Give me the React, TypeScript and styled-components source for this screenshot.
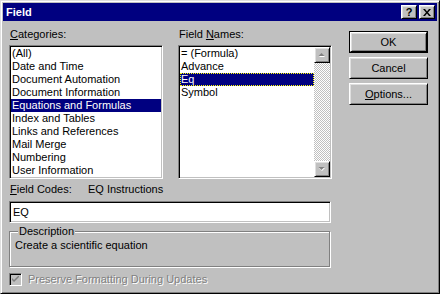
import React from 'react'
import styled, { createGlobalStyle, css } from 'styled-components'

const GlobalStyle = createGlobalStyle`
  html, body {
    margin: 0;
    padding: 0;
    background: #c0c0c0;
  }
  body {
    font-family: "Liberation Sans", Arial, sans-serif;
    font-size: 11px;
    color: #000;
  }
`

const sunken = css`
  border: 1px solid;
  border-color: #808080 #fff #fff #808080;
  box-shadow: inset 1px 1px 0 #000, inset -1px -1px 0 #c0c0c0;
`

const raised = css`
  border: 1px solid;
  border-color: #fff #000 #000 #fff;
  box-shadow: inset 1px 1px 0 #dfdfdf, inset -1px -1px 0 #808080;
`

const Window = styled.div`
  width: 440px;
  height: 294px;
  box-sizing: border-box;
  background: #c0c0c0;
  border: 1px solid;
  border-color: #dfdfdf #000 #000 #dfdfdf;
  box-shadow: inset 1px 1px 0 #fff, inset -1px -1px 0 #808080;
  padding: 2px;
  display: flex;
  flex-direction: column;
`

const TitleBar = styled.div`
  height: 18px;
  background: #000080;
  display: flex;
  align-items: center;
  justify-content: space-between;
  padding: 0 2px 0 3px;
`

const Title = styled.span`
  color: #fff;
  font-weight: bold;
  font-size: 11px;
`

const TitleButtons = styled.div`
  display: flex;
  gap: 2px;
`

const TitleButton = styled.div`
  ${raised};
  box-sizing: border-box;
  width: 16px;
  height: 14px;
  background: #c0c0c0;
  display: flex;
  align-items: center;
  justify-content: center;
  font-weight: bold;
  font-size: 11px;
  line-height: 12px;
`

const Body = styled.div`
  display: flex;
  padding: 7px 0 0 6px;
`

const LeftCol = styled.div`
  width: 323px;
  display: flex;
  flex-direction: column;
`

const ListsRow = styled.div`
  display: flex;
  gap: 15px;
`

const ListGroup = styled.div`
  width: 154px;
  display: flex;
  flex-direction: column;
`

const Label = styled.div`
  line-height: 13px;
  height: 13px;
  padding-left: 1px;
  margin-bottom: 4px;
  white-space: nowrap;
`

const ListBox = styled.div`
  ${sunken};
  box-sizing: border-box;
  height: 134px;
  background: #fff;
  padding: 1px;
  display: flex;
`

const Items = styled.div`
  flex: 1;
  display: flex;
  flex-direction: column;
`

const Item = styled.div<{ $selected?: boolean; $focused?: boolean }>`
  height: 13px;
  line-height: 13px;
  padding-left: 1px;
  white-space: nowrap;
  ${p =>
    p.$selected &&
    css`
      background: #000080;
      color: #fff;
    `}
  ${p =>
    p.$focused &&
    css`
      outline: 1px dotted #ffff00;
      outline-offset: -1px;
    `}
`

const ScrollBar = styled.div`
  width: 16px;
  display: flex;
  flex-direction: column;
`

const ScrollTrack = styled.div`
  flex: 1;
  background-color: #fff;
  background-image: repeating-conic-gradient(#c0c0c0 0 25%, #fff 0 50%);
  background-size: 2px 2px;
`

const ScrollButton = styled.div`
  ${raised};
  box-sizing: border-box;
  height: 16px;
  background: #c0c0c0;
  display: flex;
  align-items: center;
  justify-content: center;
`

const FieldCodesRow = styled.div`
  display: flex;
  line-height: 13px;
  margin-top: 4px;
  padding-left: 1px;
`

const CodesLabel = styled.span`
  width: 78px;
`

const TextBox = styled.div`
  ${sunken};
  box-sizing: border-box;
  width: 322px;
  height: 22px;
  margin-top: 5px;
  background: #fff;
  padding: 3px 3px;
  line-height: 14px;
`

const GroupBox = styled.fieldset`
  box-sizing: border-box;
  width: 321px;
  height: 42px;
  margin: 2px 0 0;
  padding: 1px 5px 0;
  border: 1px solid #808080;
  box-shadow: inset 1px 1px 0 #fff, 1px 1px 0 #fff;
  line-height: 13px;
`

const Legend = styled.legend`
  padding: 0 1px;
  margin-left: 3px;
  line-height: 13px;
  background: #c0c0c0;
`

const CheckRow = styled.div`
  display: flex;
  align-items: center;
  gap: 6px;
  margin-top: 6px;
  line-height: 13px;
`

const CheckBox = styled.div`
  ${sunken};
  box-sizing: border-box;
  width: 13px;
  height: 13px;
  background: #c0c0c0;
  display: flex;
  align-items: center;
  justify-content: center;
`

const DisabledText = styled.span`
  color: #808080;
  text-shadow: 1px 1px 0 #fff;
`

const ButtonCol = styled.div`
  margin-left: 17px;
  padding-top: 3px;
  display: flex;
  flex-direction: column;
  gap: 4px;
`

const Button = styled.div<{ $default?: boolean }>`
  box-sizing: border-box;
  width: 79px;
  height: 22px;
  background: #c0c0c0;
  display: flex;
  align-items: center;
  justify-content: center;
  ${p =>
    p.$default
      ? css`
          border: 1px solid #000;
          padding: 0;
          & > span {
            ${raised};
            box-sizing: border-box;
            width: 100%;
            height: 100%;
            display: flex;
            align-items: center;
            justify-content: center;
          }
        `
      : raised}
`

const ArrowUp = () => (
  <svg width="8" height="5" viewBox="0 0 8 5">
    <path d="M4 1 L7 4 L1 4 Z" fill="#fff" />
    <path d="M3.5 0 L6.5 3 L0.5 3 Z" fill="#808080" />
  </svg>
)

const ArrowDown = () => (
  <svg width="8" height="5" viewBox="0 0 8 5">
    <path d="M1 1 L7 1 L4 4 Z" fill="#fff" />
    <path d="M0.5 0 L6.5 0 L3.5 3 Z" fill="#808080" />
  </svg>
)

const CloseIcon = () => (
  <svg width="8" height="7" viewBox="0 0 8 7">
    <path d="M0 0h2l2 2.5L6 0h2L5 3.5 8 7H6L4 4.5 2 7H0l3-3.5Z" fill="#000" />
  </svg>
)

const CheckIcon = () => (
  <svg width="7" height="7" viewBox="0 0 7 7">
    <path d="M0 2 L0 4 L2 6 L7 1 L7 -1 L2 4 Z" fill="#808080" />
  </svg>
)

const categories = [
  '(All)',
  'Date and Time',
  'Document Automation',
  'Document Information',
  'Equations and Formulas',
  'Index and Tables',
  'Links and References',
  'Mail Merge',
  'Numbering',
  'User Information'
]

const fieldNames = ['= (Formula)', 'Advance', 'Eq', 'Symbol']

export default function App() {
  return (
    <>
      <GlobalStyle />
      <Window>
        <TitleBar>
          <Title>Field</Title>
          <TitleButtons>
            <TitleButton>?</TitleButton>
            <TitleButton>
              <CloseIcon />
            </TitleButton>
          </TitleButtons>
        </TitleBar>
        <Body>
          <LeftCol>
            <ListsRow>
              <ListGroup>
                <Label>
                  <u>C</u>ategories:
                </Label>
                <ListBox>
                  <Items>
                    {categories.map(c => (
                      <Item key={c} $selected={c === 'Equations and Formulas'}>
                        {c}
                      </Item>
                    ))}
                  </Items>
                </ListBox>
              </ListGroup>
              <ListGroup>
                <Label>
                  Field <u>N</u>ames:
                </Label>
                <ListBox>
                  <Items>
                    {fieldNames.map(n => (
                      <Item key={n} $selected={n === 'Eq'} $focused={n === 'Eq'}>
                        {n}
                      </Item>
                    ))}
                  </Items>
                  <ScrollBar>
                    <ScrollButton>
                      <ArrowUp />
                    </ScrollButton>
                    <ScrollTrack />
                    <ScrollButton>
                      <ArrowDown />
                    </ScrollButton>
                  </ScrollBar>
                </ListBox>
              </ListGroup>
            </ListsRow>
            <FieldCodesRow>
              <CodesLabel>
                <u>F</u>ield Codes:
              </CodesLabel>
              <span>EQ Instructions</span>
            </FieldCodesRow>
            <TextBox>EQ</TextBox>
            <GroupBox>
              <Legend>Description</Legend>
              Create a scientific equation
            </GroupBox>
            <CheckRow>
              <CheckBox>
                <CheckIcon />
              </CheckBox>
              <DisabledText>Preserve Formatting During Updates</DisabledText>
            </CheckRow>
          </LeftCol>
          <ButtonCol>
            <Button $default>
              <span>OK</span>
            </Button>
            <Button>Cancel</Button>
            <Button>
              <span>
                <u>O</u>ptions...
              </span>
            </Button>
          </ButtonCol>
        </Body>
      </Window>
    </>
  )
}
